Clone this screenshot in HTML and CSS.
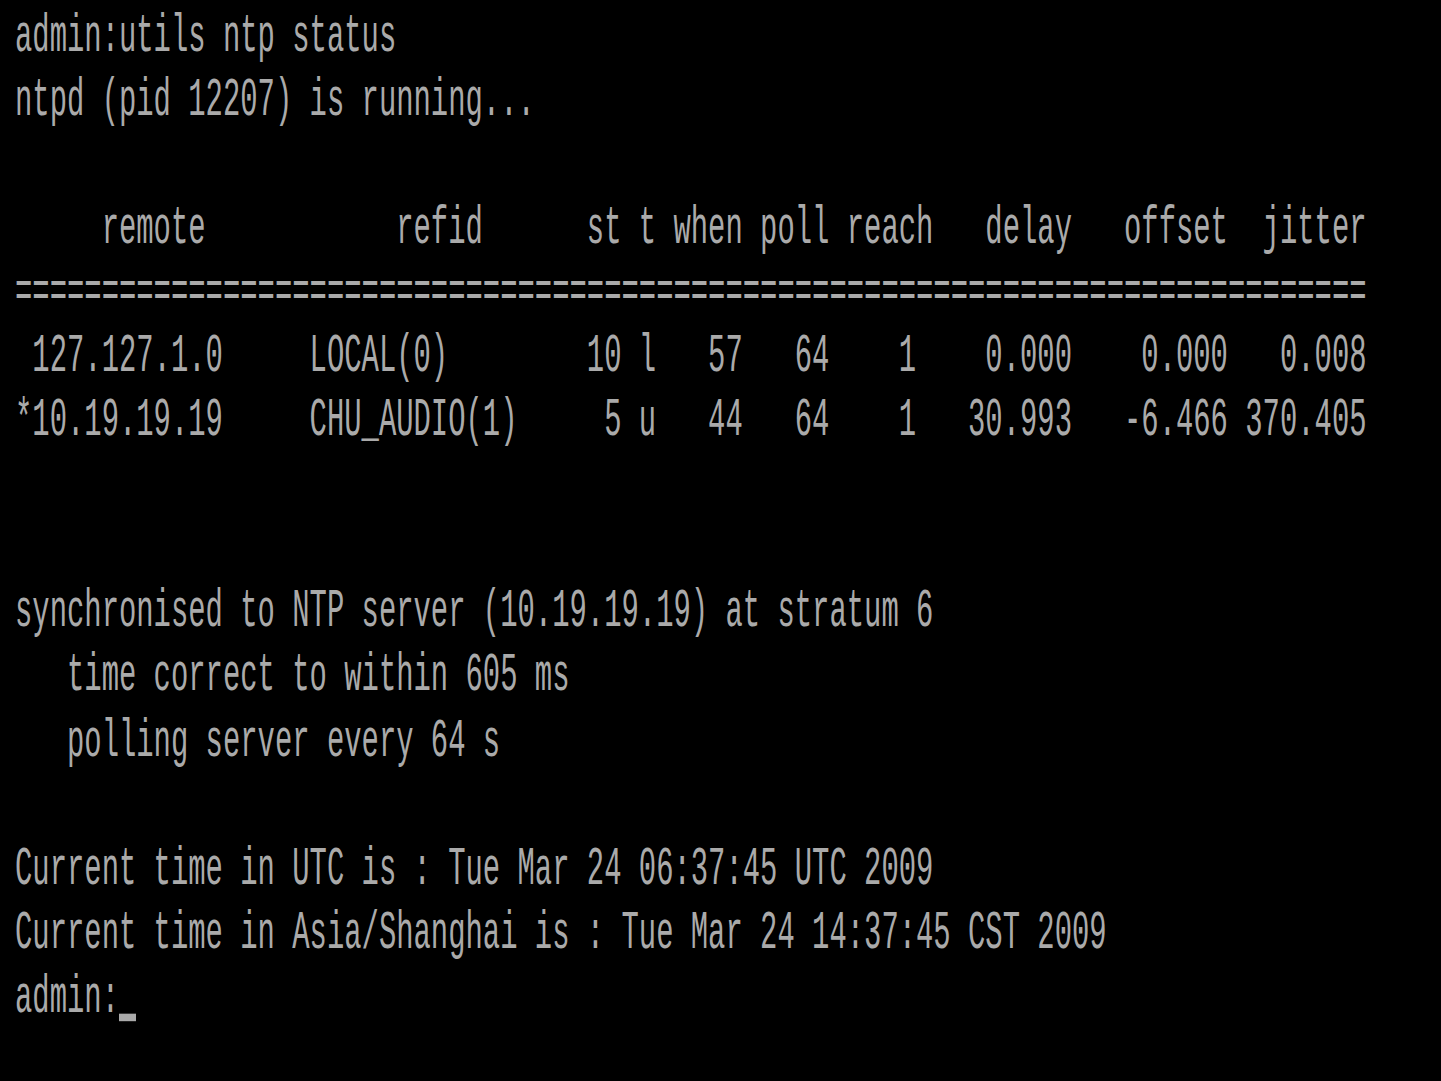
FILE: index.html
```html
<!DOCTYPE html>
<html lang="en">
<head>
<meta charset="utf-8">
<title>admin: utils ntp status</title>
<link rel="stylesheet" href="styles.css">
</head>
<body>
<main class="screen">
<pre class="console">admin:utils ntp status
ntpd (pid 12207) is running...

     remote           refid      st t when poll reach   delay   offset  jitter
==============================================================================
 127.127.1.0     LOCAL(0)        10 l   57   64    1    0.000    0.000   0.008
*10.19.19.19     CHU_AUDIO(1)     5 u   44   64    1   30.993   -6.466 370.405


synchronised to NTP server (10.19.19.19) at stratum 6
   time correct to within 605 ms
   polling server every 64 s

Current time in UTC is : Tue Mar 24 06:37:45 UTC 2009
Current time in Asia/Shanghai is : Tue Mar 24 14:37:45 CST 2009
admin:<span class="cursor"></span></pre>
</main>
</body>
</html>
```

FILE: styles.css
```css
html, body {
  margin: 0;
  padding: 0;
  background: #000000;
}

.screen {
  width: 1441px;
  height: 1081px;
  box-sizing: border-box;
  padding: 5.5px 0 0 15px;
  background: #000000;
  overflow: hidden;
}

.console {
  margin: 0;
  color: #aaaaaa;
  font-family: "Liberation Mono", "DejaVu Sans Mono", monospace;
  font-size: 28.88px;
  line-height: 34.04px;
  white-space: pre;
  transform: scale(1, 1.88);
  transform-origin: 0 0;
}

.cursor {
  display: inline-block;
  width: 1ch;
  height: 3.7px;
  vertical-align: -5.3px;
  background: #aaaaaa;
}
```
